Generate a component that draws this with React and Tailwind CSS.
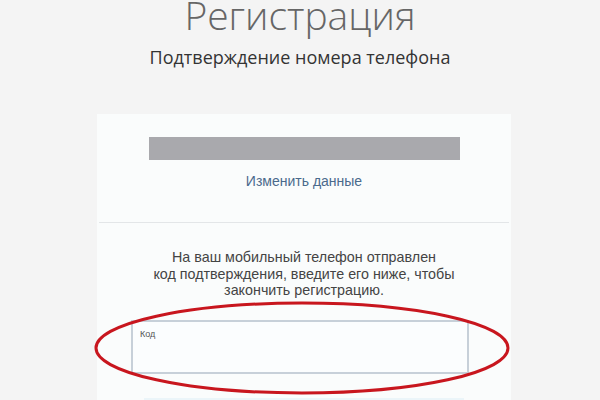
export default function App() {
  return (
    <div className="relative w-[600px] h-[400px] overflow-hidden bg-[#f4f4f4]">
      <div className="flex flex-col items-center">
        <h1 className="text-[39px] leading-[30px] font-light text-[#666] font-['Open_Sans',sans-serif]">
          Регистрация
        </h1>
        <h2 className="mt-[16px] text-[18px] leading-[22px] text-[#333] font-['Open_Sans',sans-serif]">
          Подтверждение номера телефона
        </h2>
        <div className="mt-[46px] w-[414px] ml-[8px] bg-[#fafcfc] flex flex-col items-center h-[300px]">
          <div className="mt-[23px] w-[311px] h-[23px] bg-[#a9a9ad]" />
          <a className="mt-[11px] text-[14px] leading-[20px] text-[#4a6a8c] font-['Liberation_Sans',sans-serif]">
            Изменить данные
          </a>
          <div className="mt-[31px] w-[410px] h-px bg-[#e3e6e8]" />
          <p className="mt-[26px] text-center text-[14.3px] leading-[16.5px] text-[#444] font-['Liberation_Sans',sans-serif]">
            На ваш мобильный телефон отправлен
            <br />
            код подтверждения, введите его ниже, чтобы
            <br />
            закончить регистрацию.
          </p>
          <div className="mt-[21px] w-[338px] h-[54px] border-2 border-[#c7d0d9] bg-[#fbfdfe] px-[7px] pt-[6px] mr-[8px]">
            <span className="block text-[9px] leading-[12px] text-[#555] font-['Liberation_Sans',sans-serif]">Код</span>
          </div>
          <div className="mt-[24px] w-[320px] h-[10px] bg-[#ebf5f9]" />
        </div>
      </div>
      <svg className="absolute left-0 top-0 pointer-events-none" width="600" height="400" viewBox="0 0 600 400">
        <ellipse cx="302" cy="348" rx="206" ry="45" fill="none" stroke="#c8161e" strokeWidth="3" />
      </svg>
    </div>
  );
}
